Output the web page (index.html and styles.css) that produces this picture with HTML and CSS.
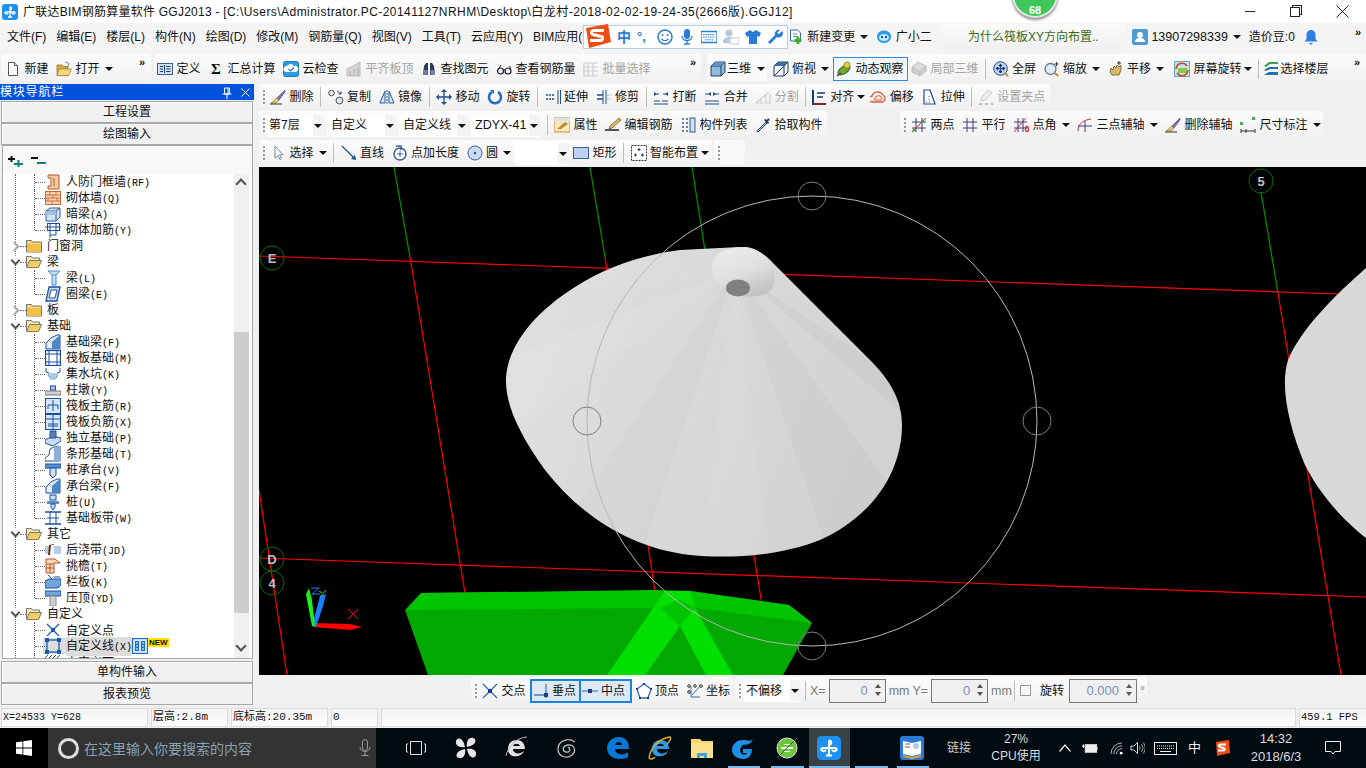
FILE: index.html
```html
<!DOCTYPE html>
<html lang="zh-CN">
<head>
<meta charset="utf-8">
<title>广联达BIM钢筋算量软件 GGJ2013</title>
<link rel="stylesheet" href="styles.css">
</head>
<body>
<svg class="defs" aria-hidden="true">
<defs>
<symbol id="app" viewBox="0 0 16 16"><rect x="0" y="0" width="16" height="16" rx="3" fill="#1e90f0"/><path d="M8 3v10M3 8h10M8 3a1.500 1.500 0 0 1 0 3M3 8a1.500 1.500 0 0 0 3 1M13 8a1.500 1.500 0 0 1-3 1M6 13h4" fill="none" stroke="#fff" stroke-width="1.300"/></symbol>
<symbol id="new" viewBox="0 0 16 16"><path d="M3.500 1.500h6l3 3v10h-9z" fill="#fff" stroke="#555"/><path d="M9.500 1.500v3h3" fill="#ddd" stroke="#555"/></symbol>
<symbol id="open" viewBox="0 0 16 16"><path d="M1 4h5l1 1.500h5v9H1z" fill="#d9a63a" stroke="#8a6a20" stroke-width=".7"/><path d="M3 8h12.500l-3 6.500H1z" fill="#f5d57e" stroke="#a07a28" stroke-width=".7"/><path d="M9 1l4 1.500-1 3" fill="none" stroke="#6b8fb5"/></symbol>
<symbol id="def" viewBox="0 0 16 16"><rect x=".5" y="2.500" width="15" height="11" fill="#cfe0f2" stroke="#3c5f8c"/><path d="M3 5.500h3M3 8h3M3 10.500h3M9 5.500h4.500M9 8h4.500M9 10.500h4.500M7.500 4v8" stroke="#24466f" fill="none"/></symbol>
<symbol id="cloudc" viewBox="0 0 16 16"><rect x=".5" y=".5" width="15" height="15" rx="2" fill="#2b9be3" stroke="#1878be"/><path d="M3 11a3 3 0 0 1 1-6 4 4 0 0 1 7 0 3 3 0 0 1 2 6z" fill="#fff"/><path d="M5.500 8l2 2 3.500-3.500" fill="none" stroke="#1878be" stroke-width="1.200"/></symbol>
<symbol id="flat" viewBox="0 0 16 16"><path d="M1 15V8l8-4 5-3v14z" fill="#d6d6d6" stroke="#bbb"/><path d="M4 15v-5M8 15V8M12 15V7" stroke="#aaa"/></symbol>
<symbol id="binoc" viewBox="0 0 16 16"><path d="M2 14l1-9 2-3h2v12zM14 14l-1-9-2-3H9v12z" fill="#2c3a55"/><rect x="2" y="9" width="4.500" height="5" fill="#6f84a8"/><rect x="9.500" y="9" width="4.500" height="5" fill="#6f84a8"/></symbol>
<symbol id="glass" viewBox="0 0 16 16"><circle cx="4.500" cy="10" r="3" fill="#eef" stroke="#222" stroke-width="1.200"/><circle cx="12" cy="10" r="3" fill="#eef" stroke="#222" stroke-width="1.200"/><path d="M7 9h2.500M2 9l3-5M14 9V5" stroke="#222" fill="none"/></symbol>
<symbol id="batch" viewBox="0 0 16 16"><path d="M1 2h14M1 2v13h14M1 6h14M1 10h14M5 2v13M10 2v13" stroke="#cdcdcd" fill="none" stroke-width="1.200"/></symbol>
<symbol id="cube" viewBox="0 0 16 16"><path d="M1 5l4-4h10v10l-4 4H1z" fill="#8fbce0" stroke="#2a3d55"/><path d="M1 5h10v10M11 5l4-4" fill="none" stroke="#2a3d55"/><path d="M1 5l4-4h10l-4 4z" fill="#5c93c2"/></symbol>
<symbol id="top" viewBox="0 0 16 16"><path d="M1 5l4-4h10v10l-4 4H1z" fill="#f0f5fb" stroke="#2a3d55"/><path d="M1 5l4-4h10l-4 4z" fill="#3a6ea5"/><path d="M11 5v10M11 5l4-4M1 15l10-10" stroke="#2a3d55" fill="none"/></symbol>
<symbol id="orbit" viewBox="0 0 16 16"><ellipse cx="8" cy="9" rx="7" ry="3.500" transform="rotate(-35 8 9)" fill="#6ea82c" stroke="#3a6814"/><circle cx="11" cy="4" r="3" fill="#e8cf42" stroke="#a18a18"/><path d="M1 15l4-3" stroke="#444" stroke-width="1.500"/></symbol>
<symbol id="local" viewBox="0 0 16 16"><path d="M1 6l6-5 8 4-6 6z" fill="#dcdcdc" stroke="#c4c4c4"/><path d="M1 6v5l8 4v-4zM9 11v4l6-5V5z" fill="#cfcfcf" stroke="#bdbdbd"/></symbol>
<symbol id="full" viewBox="0 0 16 16"><circle cx="7.500" cy="7.500" r="6.800" fill="#bcd2ee" stroke="#2b4a80"/><path d="M7.500 3v9M3 7.500h9M7.500 3L6 5h3zM7.500 12L6 10h3zM3 7.500L5 6v3zM12 7.500L10 6v3z" stroke="#1b2f66" fill="#1b2f66" stroke-width=".8"/><path d="M12 12l3 3" stroke="#c58a22" stroke-width="2"/></symbol>
<symbol id="zoom" viewBox="0 0 16 16"><circle cx="6.500" cy="8" r="5.500" fill="#dfeafa" stroke="#66758c" stroke-width="1.300"/><path d="M10.500 12l4 3" stroke="#c58a22" stroke-width="2"/><path d="M12.500 1v4M10.500 3h4" stroke="#333"/></symbol>
<symbol id="pan" viewBox="0 0 16 16"><path d="M2 11l1-4 2 2 1-4 2 2 1-3 2 2 2-2v5l-2 5H4z" fill="#d8b76a" stroke="#6d5a2a" stroke-width=".8"/><path d="M11 0v4M9 2h4" stroke="#334"/></symbol>
<symbol id="rot" viewBox="0 0 16 16"><rect x=".5" y=".5" width="15" height="15" fill="#bfe3f0" stroke="#6aa"/><rect x="4" y="7" width="9" height="5" fill="#8cc84b"/><path d="M2 8a6 6 0 0 1 11-3M14 9a6 6 0 0 1-11 3" fill="none" stroke="#d63a1f" stroke-width="1.500"/></symbol>
<symbol id="floors" viewBox="0 0 16 16"><path d="M1 5l5-4h9v2H7L3 6z" fill="#3aa048"/><path d="M1 9l5-3h9v2H7L3 10z" fill="#2170b5"/><path d="M1 14l5-3h9v3z" fill="#2170b5"/></symbol>
<symbol id="docplus" viewBox="0 0 16 16"><path d="M2.500 1h7l3 3v8h-10z" fill="#fff" stroke="#3a6ea5"/><path d="M5 5h4M5 7.500h5" stroke="#5a8ec5"/><path d="M10 8v7M6.500 11.500h7" stroke="#3fae2a" stroke-width="3"/></symbol>
<symbol id="buddy" viewBox="0 0 16 16"><path d="M8 1.500c4 0 7 2.500 7 6 0 4-3 6.500-7 6.500S1 11.500 1 7.500c0-3.500 3-6 7-6z" fill="#2a9be8"/><ellipse cx="8" cy="8.500" rx="5" ry="3.500" fill="#bfe6fb"/><circle cx="6" cy="8" r="1" fill="#123"/><circle cx="10" cy="8" r="1" fill="#123"/></symbol>
<symbol id="user" viewBox="0 0 16 16"><rect width="16" height="16" rx="2" fill="#4b9cd3"/><circle cx="8" cy="6" r="3" fill="#fff"/><path d="M3 13c0-3 2-4 5-4s5 1 5 4z" fill="#fff"/></symbol>
<symbol id="bell" viewBox="0 0 16 16"><path d="M8 1c3 0 4.500 2.500 4.500 5v4l2 2.500h-13l2-2.500V6C3.500 3.500 5 1 8 1z" fill="#2b80e8"/><path d="M6 14h4l-2 2z" fill="#2b80e8"/></symbol>
<symbol id="brush" viewBox="0 0 16 16"><path d="M15 1L7 9l2 2 6-8z" fill="#8a6bb5" stroke="#4a3a6a" stroke-width=".6"/><path d="M7 9l2 2-3 3H1c2-1 3-3 6-5z" fill="#e8c878" stroke="#7a5a20" stroke-width=".6"/><path d="M0 15h12" stroke="#333"/></symbol>
<symbol id="copy" viewBox="0 0 16 16"><circle cx="3.500" cy="4" r="2.800" fill="#dce8f5" stroke="#555"/><circle cx="11.500" cy="11.500" r="3.500" fill="#dce8f5" stroke="#555"/><path d="M9 2l4 3M13 5V2.500M13 5h-2.500" stroke="#345" fill="none"/></symbol>
<symbol id="mirror" viewBox="0 0 16 16"><path d="M1 14L6 2v12zM15 14L10 2v12z" fill="#d6e6f6" stroke="#2a5a9a"/><path d="M8 1v14" stroke="#2a5a9a" stroke-dasharray="2 1"/></symbol>
<symbol id="move" viewBox="0 0 16 16"><path d="M8 1v14M1 8h14" stroke="#1e4e8c" stroke-width="1.300"/><path d="M8 0l3 3H5zM8 16l3-3H5zM0 8l3-3v6zM16 8l-3-3v6z" fill="#1e4e8c"/></symbol>
<symbol id="turn" viewBox="0 0 16 16"><path d="M5 3a6 6 0 1 0 6 0" fill="none" stroke="#2a6cc0" stroke-width="2.600"/><path d="M3 1h4v4z" fill="#2a6cc0"/></symbol>
<symbol id="extend" viewBox="0 0 16 16"><path d="M1 6h8M1 10h8" stroke="#1e4e8c" stroke-dasharray="2 1" stroke-width="1.400"/><path d="M13 1v14M15.500 1v14" stroke="#1e4e8c"/></symbol>
<symbol id="trim" viewBox="0 0 16 16"><path d="M1 6h6M1 10h6" stroke="#1e4e8c" stroke-width="1.400"/><path d="M7 1v14M10 1v14" stroke="#1e4e8c"/><path d="M11 6h4M11 10h4" stroke="#aac" stroke-dasharray="2 1"/></symbol>
<symbol id="brk" viewBox="0 0 16 16"><path d="M1 12h6M9 12h6M1 15h14M2 5h4M10 5h4" stroke="#1e4e8c" stroke-width="1.200"/><path d="M1 3l3 2-3 2zM15 3l-3 2 3 2z" fill="#1e4e8c"/></symbol>
<symbol id="merge" viewBox="0 0 16 16"><path d="M1 12h14M1 15h14M1 5h5M10 5h5" stroke="#1e4e8c" stroke-width="1.200"/><path d="M7 3L4 5l3 2zM9 3l3 2-3 2z" fill="#1e4e8c"/></symbol>
<symbol id="split" viewBox="0 0 16 16"><path d="M1 14h14V5M1 14L14 3M6 14V9M11 14V5" stroke="#cfcfcf" fill="none" stroke-width="1.200"/></symbol>
<symbol id="align" viewBox="0 0 16 16"><path d="M2 1v14h13" stroke="#143a7a" stroke-width="2" fill="none"/><path d="M6 4h8M6 8h6" stroke="#143a7a" stroke-width="1.300"/><path d="M2 15h13" stroke="#b01c1c" stroke-width="1.500"/></symbol>
<symbol id="offset" viewBox="0 0 16 16"><path d="M2 13a3 3 0 0 1 0-6 6 6 0 0 1 11-1 4 4 0 0 1 0 7z" fill="#fde8e0" stroke="#c8604a" stroke-width="1.300"/><path d="M5 11a2 2 0 0 1 1-3 3 3 0 0 1 5 0 2 2 0 0 1 0 3z" fill="none" stroke="#c8604a"/></symbol>
<symbol id="stretch" viewBox="0 0 16 16"><path d="M3 1h6l5 14H3z" fill="#fff" stroke="#1e4e8c" stroke-width="1.200"/><path d="M8 7v1M8 10v1M5 13h1M8 13h1" stroke="#456"/></symbol>
<symbol id="grip" viewBox="0 0 16 16"><path d="M10 1l4 3-7 7-4 1 1-4z" fill="#eee" stroke="#ccc"/><path d="M1 15h3M7 15h3M13 15h2" stroke="#bbb" stroke-width="2"/></symbol>
<symbol id="attr" viewBox="0 0 16 16"><rect x="0" y="1" width="16" height="14" fill="#fbe7bc" stroke="#d58a30"/><path d="M0 1h16v3H0z" fill="#d9e3ef"/><path d="M3 12l8-7 3 2-7 5z" fill="#b38b3a"/></symbol>
<symbol id="editbar" viewBox="0 0 16 16"><path d="M14 1l2 2-9 8-3 1 1-3z" fill="#e0b860" stroke="#6a4a18" stroke-width=".7"/><path d="M0 13h14" stroke="#222" stroke-width="1.500"/></symbol>
<symbol id="list" viewBox="0 0 16 16"><rect x="10" y="1" width="5" height="14" fill="#cfe0f2" stroke="#345a88"/><path d="M2 2h2M6 2h2M2 6h2M6 6h2M2 10h2M6 10h2M2 14h2M6 14h2" stroke="#345a88" stroke-width="1.500"/></symbol>
<symbol id="dropper" viewBox="0 0 16 16"><path d="M11 5L3 13l-1 2 2-1 8-8z" fill="#bcd8f5" stroke="#1c3a6a"/><path d="M9 3l1-1 2 1 1-2 2 2-2 1 1 2-1 1z" fill="#1c3a6a"/></symbol>
<symbol id="two" viewBox="0 0 16 16"><path d="M1 5h14M1 11h14M5 1v14M11 1v14" stroke="#3a3f7a"/><path d="M1 15L15 1" stroke="#d03030"/><circle cx="3" cy="13" r="1.500" fill="#4a9a30"/><circle cx="12" cy="4" r="1.500" fill="#4a9a30"/></symbol>
<symbol id="para" viewBox="0 0 16 16"><path d="M1 5h14M1 11h14M5 1v14M11 1v14" stroke="#3a3f7a"/></symbol>
<symbol id="angle" viewBox="0 0 16 16"><path d="M1 5h13M1 11h13M5 1v14M10 1v14" stroke="#3a3f7a"/><path d="M1 15L13 1" stroke="#d03030"/><ellipse cx="14" cy="12" rx="1.500" ry="2.500" fill="none" stroke="#d03030" stroke-width="1.300"/></symbol>
<symbol id="three" viewBox="0 0 16 16"><path d="M1 14c0-7 5-11 13-12" fill="none" stroke="#d03030"/><path d="M1 9h14M8 4v11" stroke="#3a3f7a"/></symbol>
<symbol id="dim" viewBox="0 0 16 16"><path d="M1 14h14M1 12v4M15 12v4M6 12v4" stroke="#333"/><rect x="0" y="5" width="3" height="3" fill="#45b04a"/><rect x="12" y="0" width="3" height="3" fill="#45b04a"/></symbol>
<symbol id="cursor" viewBox="0 0 16 16"><path d="M5 1v12l3-2.500 2 4 1.500-.8-2-4H13z" fill="#f4f6fa" stroke="#7a8aa5"/></symbol>
<symbol id="line" viewBox="0 0 16 16"><path d="M1 1l13 13" stroke="#1e4e8c" stroke-width="1.300"/><path d="M15 15l-5-1 4-4z" fill="#1e4e8c"/></symbol>
<symbol id="ptlen" viewBox="0 0 16 16"><circle cx="8" cy="9" r="6" fill="#fff" stroke="#3a5f95" stroke-width="1.500"/><path d="M4 1h5v4" fill="none" stroke="#3a5f95" stroke-width="1.500"/><path d="M5 9h6M8 6v6" stroke="#3a5f95"/></symbol>
<symbol id="circ" viewBox="0 0 16 16"><circle cx="8" cy="8" r="7" fill="#c9dcf3" stroke="#3a5f95"/><circle cx="8" cy="8" r="1.200" fill="#2a4f85"/></symbol>
<symbol id="rect" viewBox="0 0 16 16"><rect x=".5" y="2.500" width="15" height="11" fill="#bcd2f0" stroke="#3a5f95"/></symbol>
<symbol id="smart" viewBox="0 0 16 16"><rect x=".5" y=".5" width="15" height="15" fill="#fff" stroke="#333" stroke-dasharray="2 1"/><path d="M8 3v3M6.500 4.500h3M3 10h3M4.500 8.500v3M10 10h3M11.500 8.500v3" stroke="#1e3a6a"/></symbol>
<symbol id="cross" viewBox="0 0 16 16"><path d="M1 1l14 14M15 1L1 15" stroke="#3a6ab5" stroke-width="1.300"/><rect x="6" y="6" width="4" height="4" fill="#1a3a8c"/></symbol>
<symbol id="perp" viewBox="0 0 16 16"><path d="M1 12h14M13 1v14" stroke="#4a78b5" stroke-width="1.300"/><rect x="11" y="10" width="4" height="4" fill="#1a3a8c"/></symbol>
<symbol id="mid" viewBox="0 0 16 16"><path d="M0 8h16" stroke="#6a94c5" stroke-width="1.500"/><rect x="6" y="6" width="4" height="4" fill="#1a3a8c"/></symbol>
<symbol id="vertex" viewBox="0 0 16 16"><path d="M8 1l7 5-3 9H4L1 6z" fill="#fff" stroke="#3a6ab5" stroke-width="1.300"/><path d="M7 0h2v2H7zM0 5h2v2H0zM14 5h2v2h-2zM3 14h2v2H3zM11 14h2v2h-2z" fill="#1a3a8c"/></symbol>
<symbol id="coord" viewBox="0 0 16 16"><path d="M4 3v11h9" stroke="#3a6ab5" fill="none"/><path d="M5 12l8-9" stroke="#3a6ab5"/><circle cx="2" cy="3" r="1.300" fill="none" stroke="#333"/><circle cx="2" cy="9" r="1.300" fill="none" stroke="#333"/><circle cx="8" cy="3" r="1.300" fill="none" stroke="#333"/><circle cx="14" cy="3" r="1.300" fill="none" stroke="#333"/></symbol>
<symbol id="folder" viewBox="0 0 16 16"><path d="M.5 4V2.500h5l1 1.500h9v10H.5z" fill="#f8d878" stroke="#777"/><path d="M1 6h14v8H1z" fill="#eec04a"/></symbol>
<symbol id="folderopen" viewBox="0 0 16 16"><path d="M.5 13.500v-11h5l1 1.500h7v2" fill="#f8e5a8" stroke="#777"/><path d="M3.500 6.500h12l-3 7H.5z" fill="#f4cc62" stroke="#777"/></symbol>
<symbol id="t-door" viewBox="0 0 16 16"><path d="M5 1h9v14H3v-3h3V4H3V1z" fill="#f5c9a0" stroke="#b5562a"/><path d="M9 4v8" stroke="#b5562a"/></symbol>
<symbol id="t-brick" viewBox="0 0 16 16"><rect x=".5" y="1.500" width="15" height="13" fill="#fbd5b5" stroke="#c86a38"/><path d="M1 5h14M1 8h14M1 11h14M5 2v3M11 2v3M8 5v3M3 8v3M12 8v3M7 11v3" stroke="#c86a38"/></symbol>
<symbol id="t-dark" viewBox="0 0 16 16"><path d="M1 5l4-3h10v9l-4 4H1z" fill="#d5e4f3" stroke="#2a5a9a"/><path d="M1 5h10v10M11 5l4-3" fill="none" stroke="#2a5a9a"/><path d="M1 5h10v4H1z" fill="#9dbfe0"/></symbol>
<symbol id="t-rebar" viewBox="0 0 16 16"><rect x="2.500" y="1.500" width="12" height="7" fill="#fff" stroke="#1a4ea0"/><path d="M0 5h16M5 1v15M11 1v12M5 13h6" stroke="#1a4ea0"/></symbol>
<symbol id="t-beam" viewBox="0 0 16 16"><path d="M3 1h12L11 5v10H7V5z" fill="#bfe0f5" stroke="#4a90c5"/><path d="M3 1l4 4h4" fill="none" stroke="#4a90c5"/></symbol>
<symbol id="t-ring" viewBox="0 0 16 16"><path d="M4 1h11l-3 14H1z" fill="#cfe0f5" stroke="#1a4ea0" stroke-width="1.300"/><path d="M6 4h6l-2 8H4z" fill="#fff" stroke="#1a4ea0"/></symbol>
<symbol id="t-fbeam" viewBox="0 0 16 16"><path d="M1 15V9l5-5 6-3h3v14z" fill="#e5eef8" stroke="#1a4ea0"/><path d="M7 15V8l8-7v14z" fill="#4a86c8"/></symbol>
<symbol id="t-raft" viewBox="0 0 16 16"><rect x=".5" y=".5" width="15" height="15" fill="#fff" stroke="#1a4ea0" stroke-width="1.300"/><path d="M1 4h14M1 12h14M4 1v14M12 1v14" stroke="#1a4ea0"/></symbol>
<symbol id="t-pit" viewBox="0 0 16 16"><path d="M1 2v4l3 1v3l2 3h4l2-3V7l3-1V2" fill="none" stroke="#1a4ea0"/><path d="M3 7h10l-3 7H6z" fill="#aacbe8"/></symbol>
<symbol id="t-pier" viewBox="0 0 16 16"><rect x="5.500" y="4" width="5" height="4" fill="#b5c8dc" stroke="#1a4ea0"/><rect x="0" y="9" width="16" height="4" fill="#d0d0d0" stroke="#777"/></symbol>
<symbol id="t-plus" viewBox="0 0 16 16"><rect x=".5" y=".5" width="15" height="15" fill="#d5e6f7" stroke="#1a4ea0"/><path d="M8 2v11M3 7h10M3 7v4M13 7v4" stroke="#1a4ea0" fill="none"/></symbol>
<symbol id="t-neg" viewBox="0 0 16 16"><rect x=".5" y=".5" width="15" height="15" fill="#d5e6f7" stroke="#1a4ea0"/><path d="M8 1v14M1 5h14M3 10h10M3 12h10" stroke="#1a4ea0" fill="none"/></symbol>
<symbol id="t-foot" viewBox="0 0 16 16"><path d="M0 10l8-4 8 2v3l-8 5-8-3z" fill="#c8dcf0" stroke="#1a4ea0"/><path d="M5 8V1h6v7z" fill="#5a7fa8" stroke="#1a4ea0"/></symbol>
<symbol id="t-strip" viewBox="0 0 16 16"><path d="M0 15v-3l4-3 1-6 4-2 6-1v15z" fill="#fff" stroke="#1a4ea0"/><path d="M9 15V1l6-1v15z" fill="#8cb0d8"/></symbol>
<symbol id="t-cap" viewBox="0 0 16 16"><path d="M0 2h16v4H0z" fill="#5a90cc" stroke="#1a4ea0"/><path d="M5 6h6v7l-3 3-3-3z" fill="#cfe0f2" stroke="#1a4ea0"/></symbol>
<symbol id="t-pile" viewBox="0 0 16 16"><rect x="5" y="1" width="6" height="5" fill="#cfe0f2" stroke="#1a4ea0"/><path d="M2 7h12v3H2z" fill="#5a90cc"/><path d="M6 10h4v3l-2 3-2-3z" fill="#cfe0f2" stroke="#1a4ea0"/></symbol>
<symbol id="t-band" viewBox="0 0 16 16"><path d="M0 2h16M0 14h16" stroke="#1a4ea0" stroke-width="1.500"/><path d="M5 2v12M11 2v12M2 8h12" stroke="#1a4ea0"/></symbol>
<symbol id="t-post" viewBox="0 0 16 16"><path d="M0 4h16v8H0z" fill="#b5cfe8"/><path d="M4 3l5-1-1 11H3z" fill="#6a3418"/><path d="M6 3h3v10H5z" fill="#fff"/></symbol>
<symbol id="t-eave" viewBox="0 0 16 16"><path d="M1 1h9l5 4H9v10H1z" fill="#fbd5b5" stroke="#b5562a"/><path d="M1 6h8M1 10h8M5 6v9" stroke="#b5562a"/></symbol>
<symbol id="t-par" viewBox="0 0 16 16"><path d="M0 7l4-2h12v6l-3 3H0z" fill="#6ea5dc" stroke="#1a4ea0"/><path d="M3 1l4 4M9 3h6" stroke="#1a4ea0"/></symbol>
<symbol id="t-cope" viewBox="0 0 16 16"><rect x="0" y="1" width="16" height="5" fill="#6ea5dc" stroke="#1a4ea0"/><rect x="5" y="6" width="6" height="10" fill="#cfcfcf" stroke="#888"/></symbol>
<symbol id="t-x" viewBox="0 0 16 16"><path d="M2 2l12 12M14 2L2 14" stroke="#1a5ab5" stroke-width="1.300"/><rect x="6" y="6" width="4" height="4" fill="#1a5ab5"/></symbol>
<symbol id="t-sq" viewBox="0 0 16 16"><rect x="2" y="2" width="12" height="12" fill="none" stroke="#1a5ab5" stroke-width="1.300"/><path d="M0 0h4v4H0zM12 0h4v4h-4zM0 12h4v4H0zM12 12h4v4h-4z" fill="#1a5ab5"/></symbol>
<symbol id="t-face" viewBox="0 0 16 16"><path d="M0 4l3-3M4 4l3-3M8 4l3-3M12 4l3-3" stroke="#1a5ab5"/></symbol>
<symbol id="t-tab" viewBox="0 0 16 16"><rect x=".5" y=".5" width="15" height="15" fill="#d5e8fa" stroke="#1a6ad0" stroke-width="1.200"/><path d="M3 3h4v10H3zM9 3h4v10H9z" fill="#1a6ad0"/><path d="M4 5h2M4 8h2M4 11h2M10 5h2M10 8h2M10 11h2" stroke="#fff"/></symbol>
<symbol id="fan" viewBox="0 0 24 24"><path d="M11 11C5 12 1 9 2 5s7-4 9 6zM13 11c-1-6 2-10 6-9s4 7-6 9zM13 13c6-1 10 2 9 6s-7 4-9-6zM11 13c1 6-2 10-6 9s-4-7 6-9z" fill="#e8e8e8"/></symbol>
<symbol id="ie" viewBox="0 0 24 24"><path d="M3 13c0-6 4-9 9-9s8 4 8 9H8c0 5 7 6 11 2-1 5-12 8-15 2-1-1-1-3-1-4zM8 10h7c-1-3-6-3-7 0z" fill="#e4e4e4"/><path d="M1 20C2 12 12 1 22 1" fill="none" stroke="#bbb"/></symbol>
<symbol id="swirl" viewBox="0 0 24 24"><path d="M20 6C13 1 3 5 3 13s9 10 14 6 2-11-4-10-6 6-2 7 5-3 2-5" fill="none" stroke="#bbb" stroke-width="1.300"/></symbol>
<symbol id="edge" viewBox="0 0 24 24"><path d="M1 13C1 4 8 1 13 1c6 0 10 4 10 12H9c0 6 9 7 13 3v5c-5 3-19 4-21-8zM9 9h7c0-4-6-4-7 0z" fill="#0a78d8"/></symbol>
<symbol id="ie2" viewBox="0 0 24 24"><path d="M4 13c0-6 4-9 9-9s8 4 8 9H9c0 5 7 6 11 2-1 5-12 8-15 2-1-1-1-3-1-4zM9 10h7c-1-3-6-3-7 0z" fill="#2f9be0"/><path d="M1 22C2 12 12 2 22 1c2 2-1 5-3 7M1 22c1 2 4 1 6-1" fill="none" stroke="#eab524" stroke-width="1.400"/></symbol>
<symbol id="explorer" viewBox="0 0 24 24"><path d="M1 3h9l2 2h11v17H1z" fill="#f5d46a"/><path d="M1 7h22v15H1z" fill="#fbe18c"/><path d="M7 22v-5h10v5h-3v-2h-4v2z" fill="#3fa8e0"/></symbol>
<symbol id="gapp" viewBox="0 0 24 24"><path d="M22 3C20 6 16 4 12 4 5 4 1 9 1 14s5 9 11 9 9-5 9-10h-9v4h4c-1 2-3 2-5 1-3-2-2-7 1-9 3-1 7 1 10-6z" fill="#1e90e8"/></symbol>
<symbol id="greene" viewBox="0 0 24 24"><circle cx="12" cy="12" r="10" fill="#6cc83a" stroke="#e0e0e0"/><path d="M6 11h12v2H6zM9 8h6v1H9zM9 15h6v1H9z" fill="#fff"/><path d="M2 22L22 2" stroke="#2a6a1a"/></symbol>
<symbol id="book" viewBox="0 0 24 24"><rect width="24" height="24" rx="3" fill="#2a7ad8"/><path d="M3 18V5l9 2 9-2v13l-9 2z" fill="#fff"/><path d="M3 20l9 2 9-2" stroke="#e8a030" stroke-width="2" fill="none"/><circle cx="16" cy="10" r="3" fill="#a8c8f0"/><path d="M5 8h5M5 11h5" stroke="#a44"/></symbol>
</defs>
</svg>

<header class="titlebar">
  <svg class="i"><use href="#app"/></svg>
  <span class="title">广联达BIM钢筋算量软件 GGJ2013 - <span class="path">[C:\Users\Administrator.PC-20141127NRHM\Desktop\白龙村-2018-02-02-19-24-35(2666版).GGJ12]</span></span>
  <div class="winctl">
    <span class="wmin"></span>
    <span class="wmax"></span>
    <svg class="wclose" viewBox="0 0 13 13"><path d="M.5 .5l12 12M12.500 .5l-12 12" stroke="#222" fill="none"/></svg>
  </div>
</header>
<div class="ball"><span>68</span></div>

<nav class="menubar">
  <span>文件(F)</span><span>编辑(E)</span><span>楼层(L)</span><span>构件(N)</span><span>绘图(D)</span><span>修改(M)</span><span>钢筋量(Q)</span><span>视图(V)</span><span>工具(T)</span><span>云应用(Y)</span><span>BIM应用(</span>
  <div class="menuright">
    <span class="tool"><svg class="i"><use href="#docplus"/></svg>新建变更<i class="caret"></i></span>
    <span class="tool"><svg class="i"><use href="#buddy"/></svg>广小二</span>
    <span class="tip">为什么筏板XY方向布置..</span>
    <span class="tool account"><svg class="i"><use href="#user"/></svg>13907298339<i class="caret"></i></span>
    <span class="plain">造价豆:0</span>
    <svg class="i"><use href="#bell"/></svg>
    <span class="more lastmore">»</span>
  </div>
</nav>

<div class="sogou">
  <svg class="s-logo" viewBox="0 0 28 24"><path d="M3 4l22-4 3 18-22 6z" fill="#ee4e12"/><path d="M21 6.500H11a2 2 0 0 0-1 4l8 2a2 2 0 0 1-1 4H7" fill="none" stroke="#fff" stroke-width="3"/></svg>
  <b class="s-zh">中</b>
  <span class="s-dot">°,</span>
  <svg class="s-i" viewBox="0 0 16 16"><circle cx="8" cy="8" r="7" fill="none" stroke="#2a7ad8" stroke-width="1.500"/><circle cx="5.500" cy="6" r="1" fill="#2a7ad8"/><circle cx="10.500" cy="6" r="1" fill="#2a7ad8"/><path d="M4.500 10c2 2 5 2 7 0" fill="none" stroke="#2a7ad8" stroke-width="1.300"/></svg>
  <svg class="s-i" viewBox="0 0 16 16"><rect x="5" y="0" width="6" height="10" rx="3" fill="#2a7ad8"/><path d="M3 7c0 6 10 6 10 0M8 12v3M5 15h6" fill="none" stroke="#2a7ad8" stroke-width="1.300"/></svg>
  <svg class="s-i" viewBox="0 0 16 16"><rect x="0" y="2.500" width="16" height="11" rx="1" fill="none" stroke="#2a7ad8" stroke-width="1.300"/><path d="M2 5.500h12M2 8h12M4 10.800h8" stroke="#2a7ad8" stroke-dasharray="1.500 .8"/></svg>
  <svg class="s-i" viewBox="0 0 16 16"><circle cx="6" cy="4" r="3.500" fill="#b8c8d8"/><path d="M0 14c0-5 3-6 6-6s5 1 5 3v3z" fill="#b8c8d8"/><rect x="7" y="9" width="9" height="6" fill="#fff" stroke="#b8c8d8"/></svg>
  <svg class="s-i" viewBox="0 0 16 16"><path d="M5 1L0 4l2 4 2-1v8h8V7l2 1 2-4-5-3-3 2z" fill="#2a7ad8"/></svg>
  <svg class="s-i" viewBox="0 0 16 16"><path d="M15 2l-3 3-2-1 3-3a4 4 0 0 0-5 5L1 13l2 2 7-7a4 4 0 0 0 5-6z" fill="#2a7ad8"/></svg>
</div>

<div class="toolbar1">
  <div class="grp g-a">
    <span class="tool"><svg class="i"><use href="#new"/></svg>新建</span>
    <span class="tool"><svg class="i"><use href="#open"/></svg>打开<i class="caret"></i></span>
    <span class="more">»</span>
  </div>
  <div class="grp g-b">
    <span class="tool"><svg class="i"><use href="#def"/></svg>定义</span>
    <span class="tool"><b class="sigma">Σ</b>汇总计算</span>
    <span class="tool"><svg class="i"><use href="#cloudc"/></svg>云检查</span>
    <span class="tool off"><svg class="i"><use href="#flat"/></svg>平齐板顶</span>
    <span class="tool"><svg class="i"><use href="#binoc"/></svg>查找图元</span>
    <span class="tool"><svg class="i"><use href="#glass"/></svg>查看钢筋量</span>
    <span class="tool off"><svg class="i"><use href="#batch"/></svg>批量选择</span>
    <span class="more">»</span>
  </div>
  <div class="grp g-c">
    <span class="tool box3d"><svg class="i"><use href="#cube"/></svg>三维<i class="caret"></i></span>
    <span class="tool"><svg class="i"><use href="#top"/></svg>俯视<i class="caret"></i></span>
    <span class="tool active"><svg class="i"><use href="#orbit"/></svg>动态观察</span>
    <span class="tool off snug"><svg class="i"><use href="#local"/></svg>局部三维</span>
    <i class="sep"></i>
    <span class="tool"><svg class="i"><use href="#full"/></svg>全屏</span>
    <span class="tool"><svg class="i"><use href="#zoom"/></svg>缩放<i class="caret"></i></span>
    <span class="tool"><svg class="i"><use href="#pan"/></svg>平移<i class="caret"></i></span>
    <span class="tool widen"><svg class="i"><use href="#rot"/></svg>屏幕旋转<i class="caret snugcaret"></i></span>
    <i class="sep sep-tight"></i>
    <span class="tool floorsel"><svg class="i"><use href="#floors"/></svg>选择楼层</span>
    <span class="more">»</span>
  </div>
</div>

<div class="workspace">
  <aside class="nav">
    <div class="navhead"><span>模块导航栏</span>
      <svg class="navpin" viewBox="0 0 10 12"><path d="M2.500 1h5v6h-5zM.5 7h9M5 7v5M6 1v6" stroke="#fff" fill="none"/></svg>
      <svg class="navx" viewBox="0 0 9 9"><path d="M.5 .5l8 8M8.500 .5l-8 8" stroke="#fff"/></svg>
    </div>
    <div class="navbtn">工程设置</div>
    <div class="navbtn">绘图输入</div>
    <div class="treebox">
      <div class="treetools">
        <svg class="pm" viewBox="0 0 16 12"><path d="M1 4h7M4.500 1v6" stroke="#111" stroke-width="2"/><path d="M7 9h9M11.500 5v7" stroke="#0c7f78" stroke-width="2"/></svg>
        <svg class="pm" viewBox="0 0 16 12"><path d="M1 3h7" stroke="#111" stroke-width="2"/><path d="M7 8h9" stroke="#0c7f78" stroke-width="2"/></svg>
      </div>
      <div class="treewrap">
        <div class="tree">
          <div class="leaf"><svg class="i"><use href="#t-door"/></svg><span>人防门框墙<b>(RF)</b></span></div>
          <div class="leaf"><svg class="i"><use href="#t-brick"/></svg><span>砌体墙<b>(Q)</b></span></div>
          <div class="leaf"><svg class="i"><use href="#t-dark"/></svg><span>暗梁<b>(A)</b></span></div>
          <div class="leaf end"><svg class="i"><use href="#t-rebar"/></svg><span>砌体加筋<b>(Y)</b></span></div>
          <div class="fold"><i class="chev"></i><svg class="i"><use href="#folder"/></svg><span>门窗洞</span></div>
          <div class="fold"><i class="chev down"></i><svg class="i"><use href="#folderopen"/></svg><span>梁</span></div>
          <div class="leaf"><svg class="i"><use href="#t-beam"/></svg><span>梁<b>(L)</b></span></div>
          <div class="leaf end"><svg class="i"><use href="#t-ring"/></svg><span>圈梁<b>(E)</b></span></div>
          <div class="fold"><i class="chev"></i><svg class="i"><use href="#folder"/></svg><span>板</span></div>
          <div class="fold"><i class="chev down"></i><svg class="i"><use href="#folderopen"/></svg><span>基础</span></div>
          <div class="leaf"><svg class="i"><use href="#t-fbeam"/></svg><span>基础梁<b>(F)</b></span></div>
          <div class="leaf"><svg class="i"><use href="#t-raft"/></svg><span>筏板基础<b>(M)</b></span></div>
          <div class="leaf"><svg class="i"><use href="#t-pit"/></svg><span>集水坑<b>(K)</b></span></div>
          <div class="leaf"><svg class="i"><use href="#t-pier"/></svg><span>柱墩<b>(Y)</b></span></div>
          <div class="leaf"><svg class="i"><use href="#t-plus"/></svg><span>筏板主筋<b>(R)</b></span></div>
          <div class="leaf"><svg class="i"><use href="#t-neg"/></svg><span>筏板负筋<b>(X)</b></span></div>
          <div class="leaf"><svg class="i"><use href="#t-foot"/></svg><span>独立基础<b>(P)</b></span></div>
          <div class="leaf"><svg class="i"><use href="#t-strip"/></svg><span>条形基础<b>(T)</b></span></div>
          <div class="leaf"><svg class="i"><use href="#t-cap"/></svg><span>桩承台<b>(V)</b></span></div>
          <div class="leaf"><svg class="i"><use href="#t-fbeam"/></svg><span>承台梁<b>(F)</b></span></div>
          <div class="leaf"><svg class="i"><use href="#t-pile"/></svg><span>桩<b>(U)</b></span></div>
          <div class="leaf end"><svg class="i"><use href="#t-band"/></svg><span>基础板带<b>(W)</b></span></div>
          <div class="fold"><i class="chev down"></i><svg class="i"><use href="#folderopen"/></svg><span>其它</span></div>
          <div class="leaf"><svg class="i"><use href="#t-post"/></svg><span>后浇带<b>(JD)</b></span></div>
          <div class="leaf"><svg class="i"><use href="#t-eave"/></svg><span>挑檐<b>(T)</b></span></div>
          <div class="leaf"><svg class="i"><use href="#t-par"/></svg><span>栏板<b>(K)</b></span></div>
          <div class="leaf end"><svg class="i"><use href="#t-cope"/></svg><span>压顶<b>(YD)</b></span></div>
          <div class="fold"><i class="chev down"></i><svg class="i"><use href="#folderopen"/></svg><span>自定义</span></div>
          <div class="leaf"><svg class="i"><use href="#t-x"/></svg><span>自定义点</span></div>
          <div class="leaf sel"><svg class="i"><use href="#t-sq"/></svg><span>自定义线<b>(X)</b></span><svg class="i tab"><use href="#t-tab"/></svg><em class="newtag">NEW</em></div>
          <div class="leaf"><svg class="i"><use href="#t-face"/></svg><span>自定义面</span></div>
        </div>
        <div class="scroll">
          <i class="sarrow up"></i>
          <div class="sthumb"></div>
          <i class="sarrow dn"></i>
        </div>
      </div>
    </div>
    <div class="navbtn first">单构件输入</div>
    <div class="navbtn">报表预览</div>
  </aside>

  <main class="main">
    <div class="row r2">
      <div class="grp g-2">
        <i class="gripper"></i>
        <span class="tool"><svg class="i"><use href="#brush"/></svg>删除</span>
        <i class="sep"></i>
        <span class="tool"><svg class="i"><use href="#copy"/></svg>复制</span>
        <span class="tool"><svg class="i"><use href="#mirror"/></svg>镜像</span>
        <i class="sep"></i>
        <span class="tool"><svg class="i"><use href="#move"/></svg>移动</span>
        <span class="tool"><svg class="i"><use href="#turn"/></svg>旋转</span>
        <i class="sep"></i>
        <span class="tool"><svg class="i"><use href="#extend"/></svg>延伸</span>
        <span class="tool"><svg class="i"><use href="#trim"/></svg>修剪</span>
        <i class="sep"></i>
        <span class="tool"><svg class="i"><use href="#brk"/></svg>打断</span>
        <span class="tool"><svg class="i"><use href="#merge"/></svg>合并</span>
        <span class="tool off"><svg class="i"><use href="#split"/></svg>分割</span>
        <i class="sep"></i>
        <span class="tool nudge"><svg class="i"><use href="#align"/></svg>对齐<i class="caret snugcaret"></i></span>
        <span class="tool nudge"><svg class="i"><use href="#offset"/></svg>偏移</span>
        <span class="tool"><svg class="i"><use href="#stretch"/></svg>拉伸</span>
        <i class="sep"></i>
        <span class="tool off nudge1"><svg class="i"><use href="#grip"/></svg>设置夹点</span>
      </div>
    </div>
    <div class="row r3">
      <div class="grp g-31">
        <i class="gripper"></i>
        <div class="combos">
          <span class="combo c-floor">第7层<i class="caret"></i></span>
          <span class="combo c-type">自定义<i class="caret"></i></span>
          <span class="combo c-kind">自定义线<i class="caret"></i></span>
          <span class="combo c-name">ZDYX-41<i class="caret"></i></span>
        </div>
        <i class="sep"></i>
        <span class="tool"><svg class="i"><use href="#attr"/></svg>属性</span>
        <span class="tool"><svg class="i"><use href="#editbar"/></svg>编辑钢筋</span>
        <span class="tool"><svg class="i"><use href="#list"/></svg>构件列表</span>
        <span class="tool"><svg class="i"><use href="#dropper"/></svg>拾取构件</span>
      </div>
      <div class="grp g-32">
        <i class="gripper"></i>
        <span class="tool"><svg class="i"><use href="#two"/></svg>两点</span>
        <span class="tool"><svg class="i"><use href="#para"/></svg>平行</span>
        <span class="tool"><svg class="i"><use href="#angle"/></svg>点角<i class="caret"></i></span>
        <span class="tool"><svg class="i"><use href="#three"/></svg>三点辅轴<i class="caret"></i></span>
        <span class="tool"><svg class="i"><use href="#brush"/></svg>删除辅轴</span>
        <span class="tool"><svg class="i"><use href="#dim"/></svg>尺寸标注<i class="caret"></i></span>
      </div>
    </div>
    <div class="row r4">
      <div class="grp g-41">
        <i class="gripper"></i>
        <span class="tool"><svg class="i"><use href="#cursor"/></svg>选择<i class="caret"></i></span>
        <i class="sep"></i>
        <span class="tool"><svg class="i"><use href="#line"/></svg>直线</span>
        <span class="tool"><svg class="i"><use href="#ptlen"/></svg>点加长度</span>
        <span class="tool"><svg class="i"><use href="#circ"/></svg>圆<i class="caret"></i></span>
        <span class="combo c-blank"><i class="caret"></i></span>
        <span class="tool"><svg class="i"><use href="#rect"/></svg>矩形</span>
        <i class="sep"></i>
        <span class="tool"><svg class="i"><use href="#smart"/></svg>智能布置<i class="caret snugcaret"></i></span>
      </div>
      <div class="grp g-42"><i class="gripper"></i><span class="blankbox"></span></div>
    </div>

    <svg class="canvas" viewBox="259 167 1107 508" preserveAspectRatio="none">
      <defs>
        <linearGradient id="coneg" x1="0" y1="0" x2="1" y2=".3">
          <stop offset="0" stop-color="#e0e0e0"/><stop offset=".55" stop-color="#d9d9d9"/><stop offset="1" stop-color="#d2d2d2"/>
        </linearGradient>
        <linearGradient id="holeg" x1="0" y1="0" x2=".5" y2="1">
          <stop offset="0" stop-color="#ececec"/><stop offset=".6" stop-color="#e0e0e0"/><stop offset="1" stop-color="#c4c4c4"/>
        </linearGradient>
        <clipPath id="conec"><path d="M680 250L740 247C755 248 765 254 772 262L870 360C890 380 902 400 902 425 902 470 875 515 820 540 780 556 730 559 690 555 630 548 580 515 545 470 520 435 505 405 506 378 508 345 535 312 575 287 605 268 640 255 680 250z"/></clipPath>
      </defs>
      <rect x="259" y="167" width="1107" height="508" fill="#000"/>
      <g fill="none" stroke="#008a00" stroke-width="1.300">
        <path d="M394 167L410 257M590 167L605 257M692 167L706 257M1261 192L1278 293"/>
      </g>
      <g fill="none" stroke="#f00" stroke-width="1.200">
        <path d="M259 256L1366 295M259 558L1366 597"/>
        <path d="M259 490L287 675M410 257L465 593M605 257L655 592M706 257L762 605M1278 293L1341 675"/>
      </g>
      <g fill="none" stroke="#006e00">
        <circle cx="272" cy="258" r="12"/><circle cx="272" cy="559" r="12"/><circle cx="272" cy="583" r="12"/><circle cx="1261" cy="181" r="12"/>
      </g>
      <g class="axis">
        <text x="272" y="263">E</text><text x="272" y="564">D</text><text x="272" y="588">4</text><text x="1261" y="186">5</text>
      </g>
      <path d="M1366 268C1335 295 1300 330 1288 360 1280 385 1288 425 1305 465 1320 495 1345 522 1366 538z" fill="#d8d8d8"/>
      <path d="M680 250L740 247C755 248 765 254 772 262L870 360C890 380 902 400 902 425 902 470 875 515 820 540 780 556 730 559 690 555 630 548 580 515 545 470 520 435 505 405 506 378 508 345 535 312 575 287 605 268 640 255 680 250z" fill="url(#coneg)"/>
      <g clip-path="url(#conec)">
        <path d="M735 270L500 360 500 440z" fill="#fff" opacity=".08"/>
        <path d="M735 270L560 530 640 560z" fill="#000" opacity=".015"/>
        <path d="M735 270L700 570 770 570z" fill="#fff" opacity=".06"/>
        <path d="M735 270L830 560 900 500z" fill="#000" opacity=".02"/>
        <path d="M735 270L910 420 900 380z" fill="#000" opacity=".025"/>
        <path d="M735 270L620 250 540 300z" fill="#fff" opacity=".05"/>
      </g>
      <path d="M712 266C712 254 725 247 745 247 758 248 765 255 770 263 776 272 776 285 770 291 762 298 745 298 733 294 720 289 712 278 712 266z" fill="url(#holeg)"/>
      <ellipse cx="738" cy="288" rx="12" ry="8.500" fill="#808080"/>
      <path d="M421 593L690 591 789 605 812 623 783 675H428L405 610z" fill="#00a800"/>
      <path d="M421 593L653 590 690 591 789 605 812 623 695 608 653 608 406 610z" fill="#00c400"/>
      <path d="M653 608L607 675H645L680 626 706 675H733L695 608 690 591H665z" fill="#00e000"/>
      <path d="M660 608L680 626 695 608 680 600z" fill="#00a800" opacity=".5"/>
      <g fill="none" stroke="#b8b8b8">
        <circle cx="812" cy="421" r="225"/>
      </g>
      <g fill="none" stroke="#7e7e7e">
        <circle cx="812" cy="196" r="14"/><circle cx="812" cy="646" r="14"/><circle cx="587" cy="421" r="14"/><circle cx="1037" cy="421" r="14"/>
      </g>
      <path d="M313 623L350 624 362 627 350 630 313 627z" fill="#f00"/>
      <path d="M312 626L320 596 326 594 323 606 316 627z" fill="#1a80ff"/>
      <path d="M312 626L306 594 309 588 312 600 315 626z" fill="#1cf01c"/>
      <path d="M348 609l10 10M358 609l-10 10" stroke="#f00" fill="none"/>
      <path d="M311 588h8l-7 6h8" stroke="#1a80ff" fill="none"/>
      <path d="M319 591l3 2M326 590l-6 7" stroke="#30e030" fill="none"/>
    </svg>

    <div class="row snap">
      <div class="grp g-s1">
        <i class="gripper"></i>
        <span class="tool"><svg class="i"><use href="#cross"/></svg>交点</span>
        <div class="snapbtns">
          <span class="tool on"><svg class="i"><use href="#perp"/></svg>垂点</span>
          <span class="tool on"><svg class="i"><use href="#mid"/></svg>中点</span>
        </div>
        <span class="tool"><svg class="i"><use href="#vertex"/></svg>顶点</span>
        <span class="tool"><svg class="i"><use href="#coord"/></svg>坐标</span>
      </div>
      <div class="grp g-s2">
        <i class="gripper"></i>
        <span class="combo c-off">不偏移<i class="caret"></i></span>
        <i class="sep sep-wide"></i>
        <span class="lab">X=</span>
        <span class="spin s-xy">0<i class="spinbtn"></i></span>
        <span class="lab">mm</span>
        <span class="lab">Y=</span>
        <span class="spin s-xy">0<i class="spinbtn"></i></span>
        <span class="lab">mm</span>
        <i class="sep"></i>
        <i class="check"></i>
        <span class="rotlab">旋转</span>
        <span class="spin s-rot">0.000<i class="spinbtn"></i></span>
        <span class="lab">°</span>
      </div>
    </div>
  </main>
</div>

<footer class="status">
  <span class="cell c1">X=24533 Y=628</span>
  <span class="cell c2">层高<b>:2.8m</b></span>
  <span class="cell c3">底标高<b>:20.35m</b></span>
  <span class="cell c4">0</span>
  <span class="cell c5"></span>
  <span class="cell c6">459.1 FPS</span>
</footer>

<div class="taskbar">
  <div class="start"><svg viewBox="0 0 16 16"><path d="M0 2.300l6.500-.9v6.200H0zM7.300 1.300L16 0v7.600H7.300zM0 8.400h6.500v6.200L0 13.700zM7.300 8.400H16V16l-8.700-1.200z" fill="#fff"/></svg></div>
  <div class="search">
    <i class="cortana"></i>
    <span>在这里输入你要搜索的内容</span>
    <svg class="mic" viewBox="0 0 12 18"><rect x="3.500" y=".5" width="5" height="11" rx="2.500" fill="none" stroke="#999"/><path d="M1 8c0 6 10 6 10 0M6 13v3M2.500 16.500h7" fill="none" stroke="#999"/></svg>
  </div>
  <div class="tasks">
    <span class="cell-view"><svg viewBox="0 0 20 14"><rect x="4.500" y=".5" width="11" height="13" fill="none" stroke="#ddd"/><path d="M2 3H.5v8H2M18 3h1.500v8H18" fill="none" stroke="#ddd"/></svg></span>
    <span class="task wide"><svg><use href="#fan"/></svg></span>
    <span class="task wide"><svg><use href="#ie"/></svg></span>
    <span class="task wide"><svg><use href="#swirl"/></svg></span>
    <span class="task mid"><svg><use href="#edge"/></svg></span>
    <span class="task"><svg><use href="#ie2"/></svg></span>
    <span class="task"><svg><use href="#explorer"/></svg></span>
    <span class="task run"><svg><use href="#gapp"/></svg></span>
    <span class="task run t-green"><svg><use href="#greene"/></svg></span>
    <span class="task run cur"><svg><use href="#app"/></svg></span>
    <span class="task run"></span>
    <span class="task run"><svg><use href="#book"/></svg></span>
  </div>
  <div class="tray">
    <span class="t-link">链接</span>
    <span class="t-cpu">27%<br>CPU使用</span>
    <svg class="t-i t-up" viewBox="0 0 12 8"><path d="M.5 7.500L6 1l5.500 6.500" fill="none" stroke="#eee" stroke-width="1.200"/></svg>
    <svg class="t-i t-bat" viewBox="0 0 17 12"><rect x="3.500" y="2.500" width="12" height="8" fill="#eee" stroke="#eee"/><path d="M0 4h3M1.500 2v4" stroke="#fff"/><path d="M16 5v3" stroke="#eee"/></svg>
    <svg class="t-i t-wifi" viewBox="0 0 14 14"><path d="M1 13a12 12 0 0 1 12-12M4 13a9 9 0 0 1 9-9M7 13a6 6 0 0 1 6-6" fill="none" stroke="#bbb"/><circle cx="12" cy="12" r="1.500" fill="#fff"/></svg>
    <svg class="t-i t-vol" viewBox="0 0 16 14"><path d="M1 5h3l4-4v12l-4-4H1z" fill="none" stroke="#eee"/><path d="M10 5a3 3 0 0 1 0 4M12 3a6 6 0 0 1 0 8M14 1a9 9 0 0 1 0 12" fill="none" stroke="#aaa"/></svg>
    <svg class="t-i t-kbd" viewBox="0 0 23 13"><rect x=".5" y=".5" width="22" height="12" fill="none" stroke="#eee"/><path d="M3 4h17M3 6.500h17" stroke="#eee" stroke-dasharray="1 1"/><path d="M6 9.500h11" stroke="#eee"/></svg>
    <span class="t-zh">中</span>
    <svg class="t-i t-s" viewBox="0 0 16 16"><path d="M2 2l13-2 1 13-13 3z" fill="#ee4e12"/><path d="M12 4.500H6a1.200 1.200 0 0 0-.5 2.300l4.500 1.400a1.200 1.200 0 0 1-.5 2.300H4" fill="none" stroke="#fff" stroke-width="2"/></svg>
    <span class="t-clock">14:32<br>2018/6/3</span>
    <svg class="t-i t-note" viewBox="0 0 16 14"><path d="M.5 .5h15v10H10l-2 2.500-2-2.500H.5z" fill="none" stroke="#eee"/></svg>
  </div>
</div>
</body>
</html>
```
FILE: styles.css
```css
* { box-sizing: border-box; }
html, body { margin: 0; padding: 0; }
body {
  width: 1366px; height: 768px; overflow: hidden; position: relative;
  display: flex; flex-direction: column;
  background: #f0f0f0; color: #111;
  font: 12px/16px "Liberation Sans", "Noto Sans CJK SC", sans-serif;
}
.defs { position: absolute; width: 0; height: 0; }
.i { width: 16px; height: 16px; flex: none; display: block; }

.titlebar { height: 23px; background: #fff; display: flex; align-items: center; padding: 0 0 0 2px; gap: 5px; }
.title { font-size: 12px; letter-spacing: .24px; white-space: nowrap; color: #111; }
.path { letter-spacing: .45px; }
.winctl { margin-left: auto; display: flex; align-items: center; }
.wmin { width: 10px; height: 1px; background: #222; margin-right: 35px; }
.wmax { width: 10px; height: 10px; border: 1px solid #222; margin-right: 36px; box-shadow: 2px -2px 0 -1px #fff, 2px -2px 0 0 #222; }
.wclose { width: 13px; height: 13px; margin-right: 17px; }

.ball { position: absolute; left: 1012px; top: -28px; width: 46px; height: 46px; border-radius: 50%; background: #3fc85a; border: 2px solid #e4e4e4; box-shadow: 0 2px 3px #888; color: #fff; font-weight: bold; font-size: 11px; text-align: center; }
.ball span { position: absolute; left: 0; right: 0; top: 28px; }

.menubar { height: 31px; display: flex; align-items: center; padding: 0 0 3px 7px; background: #f4f4f4; white-space: nowrap; }
.menubar > span { margin-right: 10px; }
.menuright { position: relative; display: flex; align-items: center; margin-left: 195.500px; gap: 8px; flex: 1; height: 27px; }
.tip { background: linear-gradient(#fafafa, #f0f0f0); color: #3a6a14; height: 26px; line-height: 26px; width: 186px; padding-left: 28px; border-radius: 3px; }
.plain { margin-left: 0; }
.account { margin-left: -2px; font-size: 12.500px; }
.more { font: bold 11px/12px "Liberation Sans", sans-serif; color: #111; margin-left: auto; align-self: flex-start; padding-top: 2px; }
.lastmore { margin-right: 5px; }

.sogou { position: absolute; left: 583px; top: 25px; width: 205px; height: 24px; background: #fff; border: 1px solid #b9cfe6; display: flex; align-items: center; gap: 6px; padding-left: 33px; }
.s-logo { position: absolute; left: -1px; top: -3px; width: 28px; height: 26px; }
.s-zh { color: #2a7ad8; font-size: 14px; }
.s-dot { color: #2a7ad8; font-weight: bold; font-size: 13px; width: 14px; }
.s-i { width: 16px; height: 16px; flex: none; }

.toolbar1 { height: 30px; display: flex; background: #f0f0f0; padding-left: 1px; gap: 2px; }
.grp { display: flex; align-items: center; gap: 7.500px; background: linear-gradient(#fcfcfc, #f0f0f0); border-radius: 3px; white-space: nowrap; }
.g-a { width: 150px; padding: 0 6px 0 4px; }
.g-b { width: 547px; padding: 0 5px 0 3px; margin-left: 1px; }
.g-c { flex: 1; padding: 0 6px 0 3px; margin-left: 4px; }

.tool { display: inline-flex; align-items: center; gap: 3.500px; flex: none; }
.caret { display: block; width: 0; height: 0; border: 4px solid transparent; border-top-color: #111; border-bottom-width: 0; margin-left: 1.500px; flex: none; }
.snugcaret { margin-left: -1px; }
.off { color: #a3a3a3; }
.sigma { width: 16px; font-size: 15px; text-align: center; font-family: "Liberation Serif", serif; }
.sep { display: block; width: 1px; height: 20px; background: #bdbdbd; flex: none; margin: 0 -1px; }
.sep-tight { margin: 0 -2px; }
.sep-wide { margin: 0 1px; }
.box3d { background: #fafafa; height: 23px; padding-right: 2px; gap: 1px; margin-right: -2px; }
.box3d .caret { margin-left: 5px; }
.active { border: 1px solid #2f8ce0; height: 24px; padding: 0 2px; width: 75px; gap: 4px; background: #f2f7fc; margin-left: -4px; }
.snug { margin-left: -4px; }
.widen { margin-left: 2.500px; }
.floorsel { gap: 1.500px; margin-left: -1px; }
.nudge { margin-left: -2px; }
.nudge1 { margin-left: -1px; }

.workspace { height: 621px; display: flex; }
.nav { width: 259px; flex: none; display: flex; flex-direction: column; padding-right: 5px; }
.navhead { height: 16px; background: #0053dd; color: #fff; font-size: 12px; line-height: 16px; letter-spacing: .8px; display: flex; align-items: center; position: relative; flex: none; }
.navpin { position: absolute; left: 222px; top: 3px; width: 10px; height: 12px; }
.navx { position: absolute; left: 241px; top: 4px; width: 9px; height: 9px; }
.navbtn { height: 22px; margin: 1px 1px 0 1px; border: 1px solid #a8a8a8; background: #f0f0f0; text-align: center; line-height: 21px; flex: none; box-shadow: inset 1px 1px 0 #fff; }
.navbtn + .navbtn { margin-top: 0; }
.navbtn.first { margin-top: 2px; }

.treebox { height: 514px; margin: 0 1px 0 2px; border: 1px solid #a8a8a8; display: flex; flex-direction: column; background: #fff; flex: none; }
.treetools { height: 28px; flex: none; display: flex; align-items: center; gap: 7px; padding: 2px 0 0 4px; background: #f8f8f8; }
.pm { width: 16px; height: 12px; display: block; }
.treewrap { flex: 1; display: flex; min-height: 0; position: relative; }
.tree { flex: 1; overflow: hidden; position: relative; height: 484px; }
.tree::before { content: ""; position: absolute; left: 12px; top: 0; bottom: 0; border-left: 1px dotted #666; }
.leaf, .fold { height: 16px; display: flex; align-items: center; position: relative; white-space: nowrap; }
.leaf { padding-left: 42px; gap: 5px; font-family: "Noto Sans CJK SC", sans-serif; }
.leaf::before { content: ""; position: absolute; left: 31px; top: 0; bottom: 0; border-left: 1px dotted #666; }
.leaf.end::before { bottom: 8px; }
.leaf::after { content: ""; position: absolute; left: 32px; width: 10px; top: 8px; border-top: 1px dotted #666; }
.leaf b { font: normal 10px/16px "Liberation Mono", monospace; color: #000; }
.leaf .i { position: relative; z-index: 1; }
.fold { padding-left: 23px; gap: 5px; }
.fold::after { content: ""; position: absolute; left: 17px; width: 6px; top: 8px; border-top: 1px dotted #666; }
.chev { position: absolute; left: 8px; top: 5px; width: 7px; height: 7px; border: solid #aaa; border-width: 2px 2px 0 0; transform: rotate(45deg); background: #fff; z-index: 1; }
.chev.down { border-color: #555; transform: rotate(135deg); left: 9px; top: 3px; }
.sel span { background: #dcdcdc; }
.sel { background: linear-gradient(90deg, transparent 40px, #dcdcdc 40px, #dcdcdc 130px, transparent 130px); }
.tab { margin-left: -5px; }
.newtag { position: absolute; left: 145px; top: 0; height: 9px; background: #ffe100; color: #111; font: bold 8px/9px "Liberation Sans", sans-serif; padding: 0 1px; }

.scroll { width: 15px; flex: none; margin-right: 3px; background: #f0f0f0; display: flex; flex-direction: column; height: 484px; }
.sarrow { display: block; height: 18px; flex: none; position: relative; }
.sarrow::after { content: ""; position: absolute; left: 3px; top: 6px; width: 6px; height: 6px; border: solid #555; border-width: 2px 0 0 2px; transform: rotate(45deg); }
.sarrow.dn { margin-top: auto; }
.sarrow.dn::after { transform: rotate(225deg); top: 2px; }
.sthumb { height: 281px; margin-top: 140px; background: #cdcdcd; flex: none; }

.main { width: 1107px; flex: none; display: flex; flex-direction: column; }
.row { display: flex; flex: none; }
.r2 { height: 27px; padding-bottom: 1px; }
.r3 { height: 29px; padding-bottom: 1px; }
.r4 { height: 27px; padding-bottom: 1px; }
.g-2 { width: 791px; padding-left: 4px; }
.g-31 { width: 568px; padding-left: 4px; }
.g-32 { width: 423px; margin-left: 73px; padding-left: 4px; }
.g-41 { width: 453px; padding-left: 4px; }
.g-42 { width: 31px; margin-left: 2px; padding-left: 4px; gap: 2px; }
.blankbox { width: 24px; height: 24px; background: #f8f8f8; }
.gripper { display: block; width: 2px; height: 14px; flex: none; margin-right: -2.500px; background: repeating-linear-gradient(#999 0 2px, transparent 2px 4px); }
.combos { display: flex; gap: 3px; margin-left: -3px; }
.combo { display: flex; align-items: center; height: 23px; background: #fff; padding-left: 2px; position: relative; flex: none; }
.combo::after { content: ""; position: absolute; right: 0; top: 1px; bottom: 1px; width: 11px; background: #f3f3f3; }
.combo .caret { position: absolute; right: 2px; top: 10px; z-index: 1; }
.c-floor { width: 57px; }
.c-type { width: 69px; padding-left: 4px; }
.c-kind { width: 69px; padding-left: 4px; }
.c-name { width: 69px; padding-left: 4px; font-size: 12.500px; }
.c-blank { width: 55px; margin-left: -5px; margin-right: -3px; }
.c-off { width: 57px; }

.canvas { width: 1107px; height: 508px; display: block; flex: none; }
.axis text { fill: #c0c0c0; font: bold 13px "Liberation Sans", sans-serif; text-anchor: middle; }

.snap { height: 30px; }
.g-s1 { width: 262px; margin-left: 212px; padding-left: 4px; margin-top: 2px; margin-bottom: 1px; }
.g-s2 { width: 412px; margin-left: 2px; padding-left: 4px; gap: 3px; margin-top: 2px; margin-bottom: 1px; }
.g-s2 .gripper { margin-right: 0; }
.snapbtns { display: flex; margin: 0 -3.500px; }
.on { width: 51px; height: 24px; border: 2px solid #1a84dc; background: #dce8f4; padding-left: 1px; }
.on + .on { border-left-width: 0; }
.lab { color: #7a7a7a; font-size: 12.500px; flex: none; }
.spin { display: flex; align-items: center; justify-content: flex-end; height: 24px; border: 1px solid #777; background: #f0f0f0; color: #7a93b5; padding-right: 17px; position: relative; flex: none; font-size: 13px; }
.s-xy { width: 57px; }
.s-rot { width: 68px; }
.spinbtn { position: absolute; right: 4px; top: 4px; width: 0; height: 0; border: 3px solid transparent; border-bottom: 4px solid #555; border-top: 0; }
.spinbtn::after { content: ""; position: absolute; left: -3px; top: 8px; border: 3px solid transparent; border-top: 4px solid #555; border-bottom: 0; }
.check { display: block; width: 11px; height: 11px; border: 1px solid #999; flex: none; margin-left: 3px; }
.rotlab { margin: 0 2px 0 6px; flex: none; }

.status { height: 23px; display: flex; gap: 3px; padding: 3px 0 1px 1px; background: #f0f0f0; font: 10px/17px "Liberation Mono", "Noto Sans CJK SC", monospace; }
.cell { border: 1px solid #dcdcdc; height: 19px; background: linear-gradient(#f4f4f4, #fcfcfc); padding-left: 1px; white-space: nowrap; flex: none; }
.cell b { font-weight: normal; }
.c1 { width: 147px; }
.c2 { width: 77px; font-size: 11px; }
.c3 { width: 97px; font-size: 11px; }
.c4 { width: 47px; font-size: 11px; }
.c5 { width: 915px; }
.c6 { width: 68px; font-size: 10.500px; }

.taskbar { height: 40px; display: flex; background: #020b10; position: relative; color: #ddd; }
.start { width: 48px; background: #000; display: flex; align-items: center; justify-content: center; flex: none; }
.start svg { width: 16px; height: 16px; }
.search { width: 328px; flex: none; background: #333; display: flex; align-items: center; color: #8aa0b0; font-size: 14px; padding-left: 11px; gap: 5px; font-family: "Noto Sans CJK SC", sans-serif; }
.cortana { display: block; width: 21px; height: 21px; border: 3px solid #ddd; border-radius: 50%; flex: none; margin-left: -1px; }
.mic { width: 12px; height: 18px; margin-left: auto; margin-right: 5px; }
.tasks { display: flex; height: 40px; flex: none; }
.cell-view { width: 65px; display: flex; align-items: center; padding-left: 30px; }
.cell-view svg { width: 20px; height: 14px; }
.task { width: 41.500px; height: 40px; display: flex; align-items: center; justify-content: center; flex: none; position: relative; }
.task svg { width: 24px; height: 24px; }
.task.wide { width: 50.500px; }
.task.mid { width: 44px; margin-left: 3px; }
.t-green { margin-left: 2px; }
.cur { margin-left: 1px; }
.run::after { content: ""; position: absolute; left: 5px; right: 4px; bottom: 0; height: 2px; background: #76b9ed; }
.cur { background: #3a4145; }
.cur::after { left: 0; right: 0; }
.tray { flex: 1; display: flex; align-items: center; }
.t-link { margin-left: 14px; width: 24px; color: #ccc; flex: none; white-space: nowrap; }
.t-cpu { width: 50px; margin-left: 20px; text-align: center; font-size: 12px; line-height: 17px; flex: none; white-space: nowrap; }
.t-i { flex: none; display: block; }
.t-up { width: 12px; height: 8px; margin-left: 18px; }
.t-bat { width: 16px; height: 12px; margin-left: 11px; }
.t-wifi { width: 13px; height: 13px; margin-left: 12px; }
.t-vol { width: 15px; height: 14px; margin-left: 7px; }
.t-kbd { width: 23px; height: 13px; margin-left: 9px; }
.t-zh { width: 14px; margin-left: 11px; color: #eee; font-size: 13px; flex: none; }
.t-s { width: 16px; height: 16px; margin-left: 12px; }
.t-clock { width: 60px; margin-left: 16px; text-align: center; font-size: 13px; line-height: 18px; flex: none; white-space: nowrap; }
.t-note { width: 16px; height: 14px; margin-left: 19px; }
```
